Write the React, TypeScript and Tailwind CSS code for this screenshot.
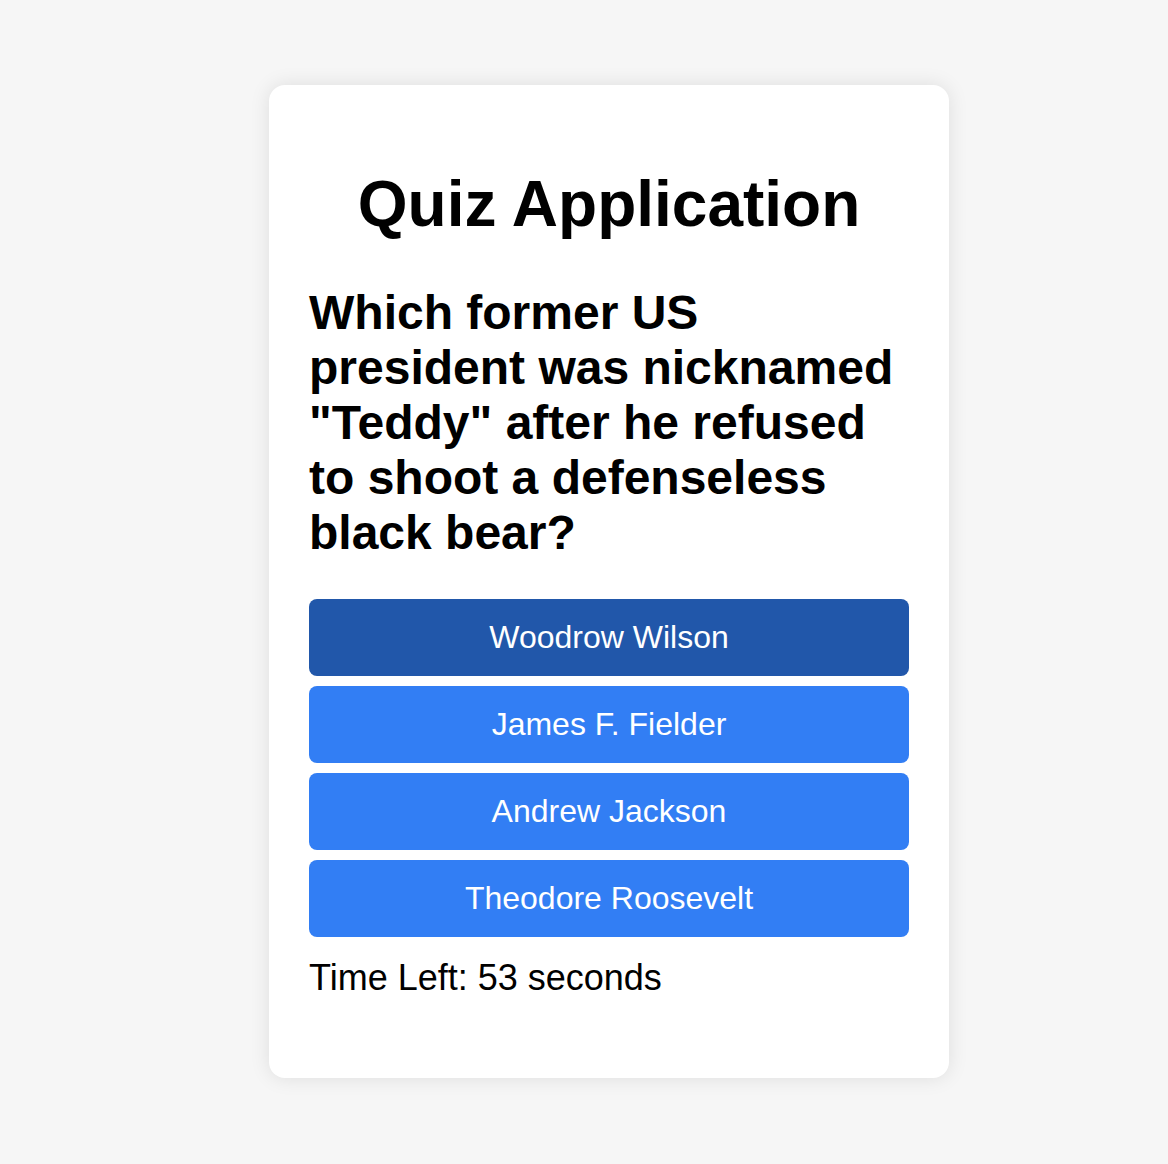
const answers = ["Woodrow Wilson", "James F. Fielder", "Andrew Jackson", "Theodore Roosevelt"];

const App = () => {
  return (
    <div
      className="min-h-[1164px] w-full bg-[#f6f6f6] flex justify-center pl-[50px] pt-[85px] text-black"
      style={{ fontFamily: '"Liberation Sans", Arial, sans-serif' }}
    >
      <div className="w-[680px] h-[993px] bg-white rounded-[16px] shadow-[0_0_20px_rgba(0,0,0,0.1)] px-[40px] pt-[40px] pb-[40px] flex flex-col">
        <h1 className="text-[64px] font-bold leading-[73.6px] text-center mt-[43px]">Quiz Application</h1>
        <h2 className="text-[48px] font-bold leading-[55.2px] mt-[43px]">
          Which former US president was nicknamed "Teddy" after he refused to shoot a defenseless black bear?
        </h2>
        <div className="mt-[38px] flex flex-col gap-[10px]">
          {answers.map((a, i) => (
            <button
              key={a}
              className={
                i === 0
                  ? "h-[77px] w-full rounded-[8px] bg-[#2157aa] text-white text-[32px] text-center"
                  : "h-[77px] w-full rounded-[8px] bg-[#327ef4] text-white text-[32px] text-center"
              }
            >
              {a}
            </button>
          ))}
        </div>
        <p className="text-[36px] leading-[41.4px] mt-[20px]">Time Left: 53 seconds</p>
      </div>
    </div>
  );
};

export default App;
